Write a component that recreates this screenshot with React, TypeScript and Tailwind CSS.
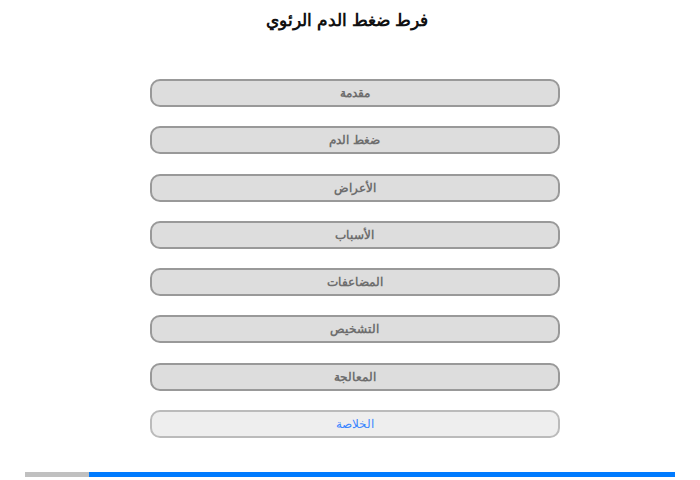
import React from "react";

const items = ["مقدمة", "ضغط الدم", "الأعراض", "الأسباب", "المضاعفات", "التشخيص", "المعالجة"];

export default function App() {
  return (
    <div dir="rtl" className="w-[700px] h-[480px] bg-white flex flex-col items-center" style={{ fontFamily: '"Liberation Sans", Arial, sans-serif' }}>
      <h1 className="mt-[9px] mr-[6px] h-[24px] text-[17px] leading-[24px] font-bold text-[#111]">فرط ضغط الدم الرئوي</h1>
      <div className="mt-[46px] mr-[-9px] flex flex-col gap-[19.3px] w-[410px]">
        {items.map((t) => (
          <div key={t} className="h-[28px] rounded-[10px] border-2 border-[#999] bg-[#ddd] flex items-center justify-center text-[12px] font-bold text-[#6e6e6e]">
            {t}
          </div>
        ))}
        <div className="h-[28px] rounded-[10px] border-2 border-[#bbb] bg-[#eee] flex items-center justify-center text-[12px] text-[#3a86ff]">
          الخلاصة
        </div>
      </div>
      <div className="mt-auto mb-[3px] w-[650px] h-[5px] flex flex-row-reverse">
        <div className="w-[64px] bg-[#c0c0c0]" />
        <div className="flex-1 bg-[#007bff]" />
      </div>
    </div>
  );
}
